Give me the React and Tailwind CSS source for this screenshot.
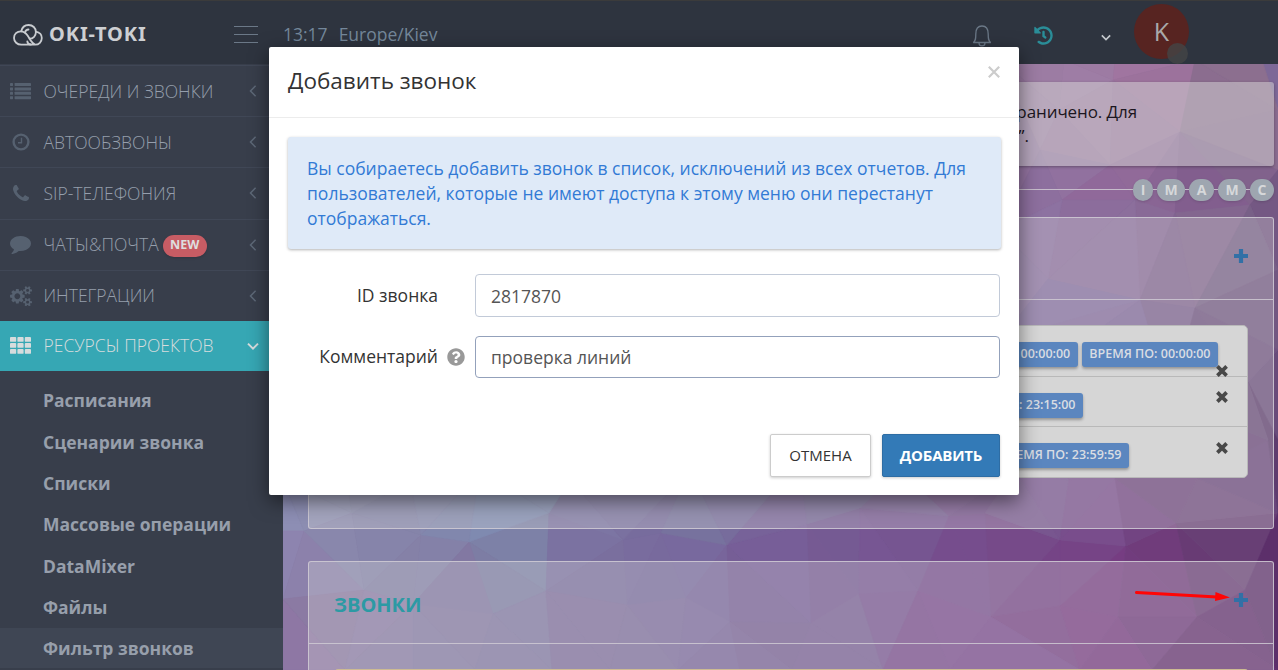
import React from "react";
import { FaHistory, FaQuestionCircle } from "react-icons/fa";

const POINTS = [
  [283, 480], [283, 531], [283, 599], [283, 670], [352, 513], [304, 531], [421, 535], [469, 542], [549, 513], [623, 540],
  [661, 533], [727, 545], [364, 590], [546, 591], [493, 614], [413, 604], [627, 605], [686, 598], [730, 622],
  [807, 524], [860, 508], [949, 516], [985, 513], [1060, 540], [1126, 546], [1176, 523], [811, 623], [859, 594],
  [918, 591], [991, 617], [1060, 606], [1118, 617], [1197, 617], [1245, 590], [345, 670], [413, 670], [475, 670],
  [552, 670], [610, 670], [678, 670], [740, 670], [792, 670], [883, 670], [950, 670], [1080, 670], [1152, 670],
  [1278, 670], [1278, 513], [340, 440], [410, 480], [480, 470], [570, 480], [690, 470], [800, 460], [900, 470],
  [1015, 470], [1069, 480], [1115, 478], [1197, 478], [1278, 440], [1000, 60], [1064, 60], [1059, 110], [1115, 60],
  [1113, 80], [1195, 60], [1180, 132], [1262, 60], [1278, 110], [1040, 150], [1110, 165], [1062, 200], [1135, 200],
  [1175, 213], [1250, 205], [1278, 170], [1000, 230], [1048, 279], [1140, 300], [1195, 308], [1278, 270],
  [1278, 350], [1000, 340], [1248, 382], [1170, 400], [1268, 440], [1000, 400],
];

const TONES = [
  [290, 500, 141, 143, 181], [290, 560, 141, 132, 175], [290, 650, 143, 118, 164], [330, 510, 137, 140, 173],
  [330, 610, 139, 122, 163], [400, 540, 134, 132, 170], [450, 610, 131, 120, 162], [510, 545, 124, 128, 165],
  [500, 500, 127, 140, 178], [600, 550, 122, 112, 160], [600, 620, 127, 110, 157], [680, 545, 120, 104, 158],
  [700, 515, 118, 116, 157], [750, 550, 119, 93, 153], [800, 620, 119, 95, 148], [860, 550, 119, 84, 147],
  [850, 515, 117, 104, 150], [960, 545, 117, 76, 140], [960, 640, 120, 72, 140], [1060, 550, 117, 67, 133],
  [1030, 500, 119, 86, 143], [1100, 500, 121, 79, 141], [1100, 620, 118, 57, 129], [1160, 550, 111, 58, 122],
  [1200, 500, 111, 74, 124], [1220, 545, 105, 63, 117], [1230, 640, 100, 48, 112], [1275, 550, 86, 45, 103],
  [1250, 480, 105, 70, 122], [1276, 440, 86, 54, 102], [1276, 350, 99, 66, 116], [1276, 640, 84, 34, 94],
  [1040, 70, 155, 123, 162], [1090, 70, 158, 125, 165], [1150, 72, 160, 116, 159], [1230, 72, 143, 112, 144],
  [1275, 75, 132, 108, 138], [1230, 130, 138, 108, 143], [1100, 130, 156, 120, 160], [1050, 190, 141, 111, 158],
  [1120, 190, 146, 104, 154], [1200, 190, 128, 92, 141], [1270, 190, 116, 87, 130], [1050, 255, 141, 115, 162],
  [1110, 250, 139, 110, 155], [1210, 260, 131, 103, 143], [1265, 265, 113, 93, 130], [1100, 310, 130, 110, 161],
  [1250, 320, 116, 90, 131], [1260, 380, 108, 80, 125],
];

function circumcircle([ax, ay], [bx, by], [cx, cy]) {
  const d = 2 * (ax * (by - cy) + bx * (cy - ay) + cx * (ay - by));
  if (Math.abs(d) < 1) return null;
  const a = ax * ax + ay * ay;
  const b = bx * bx + by * by;
  const c = cx * cx + cy * cy;
  const x = (a * (by - cy) + b * (cy - ay) + c * (ay - by)) / d;
  const y = (a * (cx - bx) + b * (ax - cx) + c * (bx - ax)) / d;
  return [x, y, (ax - x) ** 2 + (ay - y) ** 2];
}

function toneAt(x, y) {
  let w = 0;
  const sum = [0, 0, 0];
  for (const t of TONES) {
    const k = 1 / ((t[0] - x) ** 2 + (t[1] - y) ** 2 + 700) ** 1.9;
    w += k;
    for (let i = 0; i < 3; i++) sum[i] += k * t[i + 2];
  }
  return sum.map((v) => v / w);
}

function buildFacets() {
  const out = [];
  const n = POINTS.length;
  for (let i = 0; i < n; i++)
    for (let j = i + 1; j < n; j++)
      for (let k = j + 1; k < n; k++) {
        const tri = [POINTS[i], POINTS[j], POINTS[k]];
        const c = circumcircle(...tri);
        if (!c) continue;
        if (POINTS.some((p, m) => m !== i && m !== j && m !== k && (p[0] - c[0]) ** 2 + (p[1] - c[1]) ** 2 < c[2] - 0.01)) continue;
        const x = (tri[0][0] + tri[1][0] + tri[2][0]) / 3;
        const y = (tri[0][1] + tri[1][1] + tri[2][1]) / 3;
        const shade = ((i * 7 + j * 13 + k * 5) % 3) - 1;
        const color = `rgb(${toneAt(x, y).map((v) => Math.round(v + shade)).join(",")})`;
        out.push({ points: tri.map((p) => p.join(",")).join(" "), color });
      }
  return out;
}

const FACETS = buildFacets();

function Backdrop() {
  return (
    <svg className="absolute inset-0" width="1278" height="670" viewBox="0 0 1278 670" aria-hidden="true">
      <rect width="1278" height="670" fill="#7d6897" />
      {FACETS.map((f, i) => (
        <polygon key={i} points={f.points} fill={f.color} stroke={f.color} strokeWidth="0.6" />
      ))}
    </svg>
  );
}

const ListIcon = () => (
  <svg width="21" height="17" viewBox="0 0 21 17" fill="currentColor">
    {[0, 4.4, 8.8, 13.2].map((y) => (
      <g key={y}>
        <rect x="0" y={y} width="3" height="3" rx="0.4" />
        <rect x="4.6" y={y} width="16.4" height="3" rx="0.4" />
      </g>
    ))}
  </svg>
);
const ClockIcon = () => (
  <svg width="18" height="18" viewBox="0 0 18 18" fill="none" stroke="currentColor">
    <circle cx="9" cy="9" r="7.4" strokeWidth="2.4" />
    <path d="M9.5 4.8v5H6" strokeWidth="1.4" />
  </svg>
);
const PhoneIcon = () => (
  <svg width="16" height="16" viewBox="0 128 1408 1408" fill="currentColor">
    <path d="M1408 1240q0 27-10 70.5t-21 68.5q-21 50-122 106-94 51-186 51-27 0-53-3.5t-57.5-12.5-47-14.5-55.5-20.5-49-18q-98-35-175-83-127-79-264-216t-216-264q-48-77-83-175-3-9-18-49t-20.5-55.5-14.5-47-12.5-57.5-3.5-53q0-92 51-186 56-101 106-122 25-11 68.5-21t70.5-10q14 0 21 3 18 6 53 76 11 19 30 54t35 63.5 31 53.5q3 4 17.5 25t21.5 35.5 7 28.5q0 20-28.5 50t-62 55-62 53-28.5 46q0 9 5 22.5t8.5 20.5 14 24 11.5 19q76 137 174 235t235 174q2 1 19 11.5t24 14 20.5 8.5 22.5 5q18 0 46-28.5t53-62 55-62 50-28.5q14 0 28.5 7t35.5 21.5 25 17.5q25 15 53.5 31t63.5 35 54 30q70 35 76 53 3 7 3 21z" />
  </svg>
);
const CommentIcon = () => (
  <svg width="21" height="18" viewBox="0 256 1792 1536" fill="currentColor">
    <path d="M1792 896q0 174-120 321.5t-326 233-450 85.5q-70 0-145-8-198 175-460 242-49 14-114 22-17 2-30.5-9t-17.5-29v-1q-3-4-.5-12t2-10 4.5-9.5l6-9 7-8.5 8-9q7-8 31-34.5t34.5-38 31-39.5 32.5-51 27-59 26-76q-157-89-247.5-220t-90.5-281q0-130 71-248.5t191-204.5 286-136.5 348-50.5q244 0 450 85.5t326 233 120 321.5z" />
  </svg>
);
const CogsIcon = () => (
  <svg width="22" height="20.5" viewBox="0 0 1920 1792" fill="currentColor">
    <path d="M896 896q0-106-75-181t-181-75-181 75-75 181 75 181 181 75 181-75 75-181zm768 512q0-52-38-90t-90-38-90 38-38 90q0 53 37.5 90.5t90.5 37.5 90.5-37.5 37.5-90.5zm0-1024q0-52-38-90t-90-38-90 38-38 90q0 53 37.5 90.5t90.5 37.5 90.5-37.5 37.5-90.5zm-384 421v185q0 10-7 19.5t-16 10.5l-155 24q-11 35-32 76 34 48 90 115 7 11 7 20 0 12-7 19-23 30-82.5 89.5t-78.5 59.5q-11 0-21-7l-115-90q-37 19-77 31-11 108-23 155-7 24-30 24h-186q-11 0-20-7.5t-10-17.5l-23-153q-34-10-75-31l-118 89q-7 7-20 7-11 0-21-8-144-133-144-160 0-9 7-19 10-14 41-53t47-61q-23-44-35-82l-152-24q-10-1-17-9.5t-7-19.5v-185q0-10 7-19.5t16-10.5l155-24q11-35 32-76-34-48-90-115-7-11-7-20 0-12 7-20 22-30 82-89t79-59q11 0 21 7l115 90q34-18 77-32 11-108 23-154 7-24 30-24h186q11 0 20 7.5t10 17.5l23 153q34 10 75 31l118-89q8-7 20-7 11 0 21 8 144 133 144 160 0 8-7 19-12 16-42 54t-45 60q23 48 34 82l152 23q10 2 17 10.5t7 19.5zm640 533v140q0 16-149 31-12 27-30 52 51 113 51 138 0 4-4 7-122 71-124 71-8 0-46-47t-52-68q-20 2-30 2t-30-2q-14 21-52 68t-46 47q-2 0-124-71-4-3-4-7 0-25 51-138-18-25-30-52-149-15-149-31v-140q0-16 149-31 13-29 30-52-51-113-51-138 0-4 4-7 4-2 35-20t59-34 30-16q8 0 46 46.5t52 67.5q20-2 30-2t30 2q51-71 92-112l6-2q4 0 124 70 4 3 4 7 0 25-51 138 17 23 30 52 149 15 149 31zm0-1024v140q0 16-149 31-12 27-30 52 51 113 51 138 0 4-4 7-122 71-124 71-8 0-46-47t-52-68q-20 2-30 2t-30-2q-14 21-52 68t-46 47q-2 0-124-71-4-3-4-7 0-25 51-138-18-25-30-52-149-15-149-31v-140q0-16 149-31 13-29 30-52-51-113-51-138 0-4 4-7 4-2 35-20t59-34 30-16q8 0 46 46.5t52 67.5q20-2 30-2t30 2q51-71 92-112l6-2q4 0 124 70 4 3 4 7 0 25-51 138 17 23 30 52 149 15 149 31z" />
  </svg>
);
const GridIcon = () => (
  <svg width="21" height="17" viewBox="0 0 21 17" fill="currentColor">
    {[0, 6, 12].map((y) =>
      [0, 7.4, 14.8].map((x) => <rect key={x + "-" + y} x={x} y={y} width="6.2" height="4.8" rx="0.9" />)
    )}
  </svg>
);
const AngleLeft = () => (
  <svg width="8" height="12" viewBox="0 0 8 12" fill="none" stroke="currentColor" strokeWidth="1.5">
    <path d="M6.6 0.8 1.5 6l5.1 5.2" />
  </svg>
);
const AngleDown = ({ size }) => (
  <svg width={size} height={size * 0.7} viewBox="0 0 12 8" fill="none" stroke="currentColor" strokeWidth="2">
    <path d="M1 1.4 6 6.4l5-5" />
  </svg>
);
const PlusIcon = () => (
  <svg width="14" height="14" viewBox="0 0 14 14" fill="#3270a6">
    <path d="M4.9 0h4.2v4.900H14v4.200H9.100V14H4.900V9.100H0V4.900h4.900z" />
  </svg>
);
const CrossIcon = () => (
  <svg width="12" height="12" viewBox="0 0 12 12" fill="none" stroke="#484848" strokeWidth="3.7">
    <path d="M1.4 1.4l9.2 9.2M10.6 1.4l-9.2 9.2" />
  </svg>
);

const Logo = () => (
  <svg width="30" height="22" viewBox="0 0 30 22" fill="none" stroke="#c9ccd0" strokeWidth="1.8" strokeLinecap="round">
    <path d="M8.2 7.4C9 3.6 12 1 15.6 1c4.2 0 7.300 3 7.300 7 0 3.800-2.700 6.700-6.300 6.700" />
    <path d="M22.800 7.600c3.500.6 6 3.200 6 6.500 0 3.700-2.900 6.600-6.600 6.600H8.200C4.200 20.700 1 17.700 1 14c0-3.800 3-6.700 6.800-6.700 3.200 0 5.100 1.700 6.800 4.200l3.100 5c1 1.600 2.300 3 4.300 4" />
    <path d="M12 8.500c.4-1.700 1.700-3 3.500-3M18 20.500c-2 0-3.500-1.300-3.700-3.200" />
  </svg>
);

const MENU = [
  { label: "ОЧЕРЕДИ И ЗВОНКИ", icon: ListIcon },
  { label: "АВТООБЗВОНЫ", icon: ClockIcon },
  { label: "SIP-ТЕЛЕФОНИЯ", icon: PhoneIcon },
  { label: "ЧАТЫ&ПОЧТА", icon: CommentIcon, badge: "NEW" },
  { label: "ИНТЕГРАЦИИ", icon: CogsIcon },
];
const SUBMENU = ["Расписания", "Сценарии звонка", "Списки", "Массовые операции", "DataMixer", "Файлы"];

function Header() {
  return (
    <header className="relative flex h-[64px] shrink-0 items-start border-t border-[#3b3b3b] bg-[#2e343f]">
      <div className="flex h-full w-[283px] items-center pl-[13px] pt-[4px]">
        <Logo />
        <span className="ml-[6px] mb-[2px] font-['Noto_Sans'] text-[20px] font-bold leading-none tracking-[0.9px] text-[#cdcfd2]">OKI-TOKI</span>
        <span className="ml-auto mr-[25px] flex h-[17px] w-[24px] flex-col justify-between">
          <i className="h-px bg-[#6b7887]" />
          <i className="h-px bg-[#6b7887]" />
          <i className="h-px bg-[#6b7887]" />
        </span>
      </div>
      <div className="flex gap-[11px] pt-[21px] text-[17.500px] leading-[25px] text-[#74879a]">
        <span>13:17</span>
        <span>Europe/Kiev</span>
      </div>
      <div className="ml-auto flex h-full items-start pr-[89px]">
        <svg className="mt-[24px]" width="20" height="22" viewBox="0 0 20 22" fill="none" stroke="#6b7887" strokeWidth="1.3">
          <path d="M1.200 17.500c2.600-1.300 2.600-4 2.600-8.500C3.800 4 6.200 1 10 1s6.200 3 6.200 8c0 4.500 0 7.200 2.600 8.500zM7 18c0 1.700 1.200 2.900 3 2.900s3-1.200 3-2.900" />
        </svg>
        <FaHistory className="ml-[42px] mt-[25px] text-[#2a8d98]" size={19} />
        <span className="ml-[48px] mt-[33px] text-[#c4c8cc]"><AngleDown size={10} /></span>
        <div className="relative ml-[23px] mt-[3px] flex h-[55px] w-[55px] items-center justify-center rounded-full bg-[#572421] text-[25px] text-[#a9a9a9]">
          <span>K</span>
          <span className="absolute left-[33px] top-[39px] h-[21px] w-[21px] rounded-full bg-[#434546]/80" />
        </div>
      </div>
    </header>
  );
}

function Sidebar() {
  return (
    <nav className="flex w-[283px] shrink-0 flex-col bg-[#383e4b] pt-px">
      {MENU.map(({ label, icon: Icon, badge }) => (
        <div key={label} className="flex h-[51.200px] items-center border-t border-[#404756] text-[#959eac]">
          <span className="flex w-[41px] justify-center text-[#566170]"><Icon /></span>
          <span className="ml-[2.500px] whitespace-nowrap text-[17.500px] font-light leading-[25px]">{label}</span>
          {badge && (
            <span className="ml-[4px] mt-[2px] flex h-[22px] w-[44px] items-center justify-center rounded-full bg-[#c75c64] text-[12.500px] font-bold text-[#dedede] shadow">
              {badge}
            </span>
          )}
          <span className="ml-auto mr-[26px] text-[#5d6877]"><AngleLeft /></span>
        </div>
      ))}
      <div className="flex h-[50px] items-center bg-[#36a7b4] text-[#d6dcdd]">
        <span className="flex w-[41px] justify-center"><GridIcon /></span>
        <span className="ml-[2.500px] mb-[2px] text-[17.500px] font-light">РЕСУРСЫ ПРОЕКТОВ</span>
        <span className="ml-auto mr-[24px]"><AngleDown size={12} /></span>
      </div>
      <div className="flex flex-col pt-[9px] text-[17.500px] font-bold text-[#979fab]">
        {SUBMENU.map((item) => (
          <div key={item} className="flex h-[41.300px] items-center pl-[43px]">{item}</div>
        ))}
        <div className="flex h-[40px] items-center bg-[#3f4654] pl-[43px]">Фильтр звонков</div>
      </div>
    </nav>
  );
}

const Tag = ({ children }) => (
  <span className="flex h-[25px] items-center whitespace-nowrap rounded-[3px] bg-[#5b86bf] px-[7.500px] text-[12.500px] font-semibold text-[#d9dde3] shadow-[0_2px_3px_rgba(0,0,0,0.3)]">
    {children}
  </span>
);

function Content() {
  return (
    <main className="relative min-w-0 flex-1 overflow-hidden pl-[25px] pr-[4px]">
      <div className="mt-[18px] flex h-[84px] flex-col items-end rounded-[3px] bg-[#d6d6d6]/50 pr-[137px] pt-[18px] text-[17px] leading-[23.500px] text-[#1b1620] shadow-[0_1px_3px_rgba(0,0,0,0.3)]">
        <span className="tracking-[-0.1px]">ограничено. Для</span>
        <span className="mr-[108px]">ь”.</span>
      </div>
      <div className="mt-[12px] flex h-[23px] items-center">
        <i className="h-px flex-1 bg-[#c6bccb]" />
        {["I", "M", "A", "M", "C"].map((letter, i) => (
          <React.Fragment key={i}>
            {i > 0 && <i className="h-px w-[4px] bg-[#c6bccb]" />}
            <span className={`${i === 0 ? "w-[20px]" : i === 1 || i === 3 ? "w-[28px]" : i === 2 ? "w-[25px]" : "w-[24px]"} flex h-[22px] items-center justify-center rounded-full bg-[#9ea6b0] text-[14px] font-bold text-[#d6d8da] shadow`}>
              {letter}
            </span>
          </React.Fragment>
        ))}
      </div>
      <section className="mt-[16px] h-[312px] rounded-[3px] border border-[#cfcad3]/85 bg-[#d9d9d9]/30">
        <div className="flex h-[82px] items-center justify-end border-b border-[#cfcad3]/85 pr-[25px]">
          <span className="mb-[6px]"><PlusIcon /></span>
        </div>
        <div className="ml-[26px] mr-[25px] mt-[25px] h-[153px] rounded-[5px] border border-[#b9b9b9] bg-[#d6d6d6]">
          <div className="flex h-[51px] items-start justify-end border-b border-[#b9b9b9] pt-[16px]">
            <div className="mr-[4px]"><Tag>ВРЕМЯ С: 00:00:00</Tag></div>
            <Tag>ВРЕМЯ ПО: 00:00:00</Tag>
            <span className="-ml-[2px] mr-[19px] mt-[23px] h-[12px]"><CrossIcon /></span>
          </div>
          <div className="flex h-[50px] items-start justify-end border-b border-[#b9b9b9]">
            <div className="mt-[16px]"><Tag>ВРЕМЯ ПО: 23:15:00</Tag></div>
            <span className="ml-[133px] mr-[19px] mt-[14px]"><CrossIcon /></span>
          </div>
          <div className="flex h-[50px] items-start justify-end">
            <div className="mt-[16px]"><Tag>ВРЕМЯ ПО: 23:59:59</Tag></div>
            <span className="ml-[87px] mr-[19px] mt-[15px]"><CrossIcon /></span>
          </div>
        </div>
      </section>
      <section className="mt-[32px] h-[150px] rounded-[3px] border border-[#cfcad3]/85 bg-[#d9d9d9]/30">
        <div className="relative flex h-[82px] items-center justify-between border-b border-[#cfcad3]/85 pl-[25px] pr-[25px]">
          <h2 className="mt-[4px] text-[20px] font-bold text-[#2c9aa4]">ЗВОНКИ</h2>
          <span className="mb-[5px]"><PlusIcon /></span>
          <svg className="absolute right-[43px] top-[27px]" width="95" height="14" viewBox="0 0 95 14">
            <path d="M1.500 3.500 82 8" stroke="#ff0505" strokeWidth="3" strokeLinecap="round" />
            <path d="M80.500 3 95 8.500 80 12z" fill="#ff0505" />
          </svg>
        </div>
        <div className="ml-[26px] mr-[25px] mt-[25px] h-[60px] rounded-[3px] bg-[#cdbb92]" />
      </section>
    </main>
  );
}

function Modal() {
  return (
    <div className="absolute left-[269px] top-[47px] flex h-[448px] w-[750px] flex-col rounded-[2px] bg-white shadow-[0_6px_19px_rgba(0,0,0,0.5)]">
      <div className="flex h-[71px] items-start justify-between border-b border-[#ececec] pl-[19px] pr-[19px]">
        <h1 className="mt-[16px] text-[22.500px] leading-[36px] text-[#333]">Добавить звонок</h1>
        <svg className="mt-[19px]" width="12" height="12" viewBox="0 0 12 12" fill="none" stroke="#cccccc" strokeWidth="2.200">
          <path d="M.8.800l10.400 10.400M11.200.800.800 11.200" />
        </svg>
      </div>
      <div className="ml-[18.500px] mr-[18.500px] mt-[19px] h-[112px] rounded-[3px] bg-[#dfeaf8] px-[19.500px] pt-[19px] text-[17.500px] leading-[25px] text-[#327ad5] shadow-[0_1px_3px_rgba(0,0,0,0.3)]">
        <p>Вы собираетесь добавить звонок в список, исключений из всех отчетов. Для</p>
        <p>пользователей, которые не имеют доступа к этому меню они перестанут</p>
        <p>отображаться.</p>
      </div>
      <div className="mr-[19px] mt-[25px] flex h-[43px] items-center text-[17.500px] text-[#333]">
        <span className="w-[169px] text-right">ID звонка</span>
        <div className="ml-[37px] flex h-[43px] flex-1 items-center rounded-[4px] border border-[#c2cad8] pl-[15px] pt-[2px] text-[#555]">2817870</div>
      </div>
      <div className="mr-[19px] mt-[19px] flex h-[42px] items-center text-[17.500px] text-[#333]">
        <span className="mb-[2px] w-[169px] text-right">Комментарий</span>
        <FaQuestionCircle className="ml-[9px] text-[#999]" size={18} />
        <div className="ml-[10px] flex h-[42px] flex-1 items-center rounded-[4px] border border-[#93a1bb] pl-[15px] pt-[1px] text-[#555]">проверка линий</div>
      </div>
      <div className="mr-[19px] mt-[56px] flex justify-end gap-[11px] text-[15px]">
        <button className="h-[43px] w-[101px] rounded-[2px] border border-[#ccc] bg-white font-medium text-[#333] shadow-[0_1px_3px_rgba(0,0,0,0.2)]">ОТМЕНА</button>
        <button className="h-[43px] w-[118px] rounded-[2px] border border-[#2e6da4] bg-[#337ab7] font-bold tracking-[-0.2px] text-white shadow-[0_1px_3px_rgba(0,0,0,0.2)]">ДОБАВИТЬ</button>
      </div>
    </div>
  );
}

export default function App() {
  return (
    <div className="relative flex h-[670px] w-[1278px] flex-col overflow-hidden font-['Open_Sans','Noto_Sans',sans-serif]">
      <Backdrop />
      <Header />
      <div className="relative flex min-h-0 flex-1">
        <Sidebar />
        <Content />
      </div>
      <Modal />
    </div>
  );
}
